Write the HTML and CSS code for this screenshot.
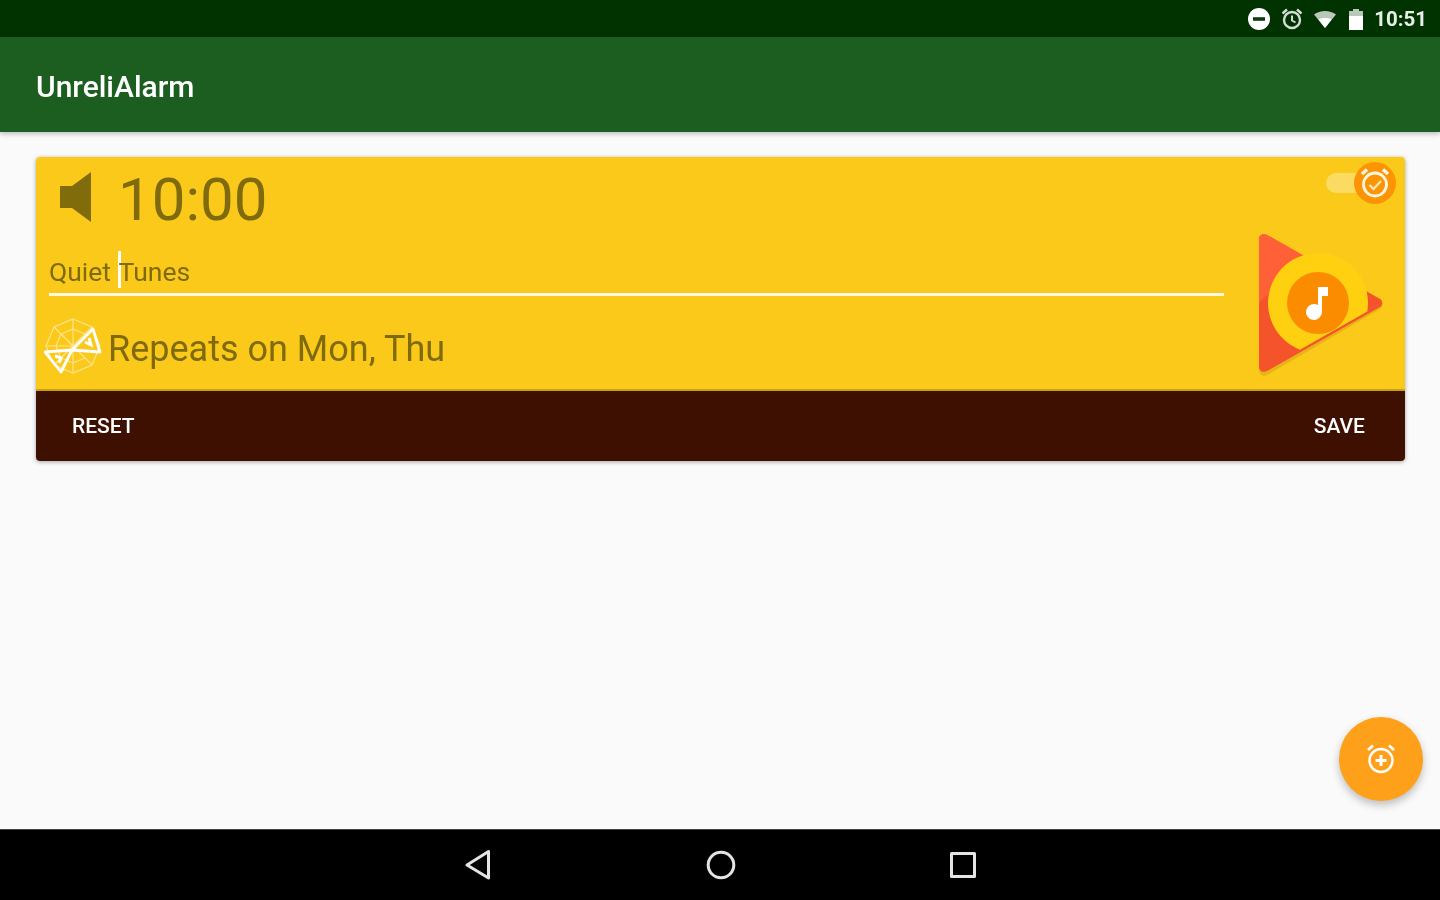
FILE: index.html
```html
<!DOCTYPE html>
<html lang="en">
<head>
  <meta charset="UTF-8" />
  <meta name="viewport" content="width=device-width, initial-scale=1.0" />
  <title>UnreliAlarm</title>
  <link rel="stylesheet" href="styles.css">
</head>
<body>
  <div class="screen">
    <div class="status-bar">
      <svg class="status-icon" width="24" height="24" viewBox="0 0 24 24"><circle cx="12" cy="12" r="11" fill="#fff"/><rect x="6" y="10.2" width="12" height="3.6" fill="#0f3d0f"/></svg>
      <svg class="status-icon" width="24" height="24" viewBox="0 0 24 24" fill="none" stroke="#d5dcd5"><circle cx="12" cy="13" r="8" stroke-width="2.4"/><path d="M12 8.5V13.5L15.5 15.5" stroke-width="2"/><path d="M2.5 6.5L7 2.5M21.5 6.5L17 2.5" stroke-width="2.4"/></svg>
      <svg class="status-icon" width="24" height="24" viewBox="0 0 24 24"><path d="M1 7.5C7 2.8 17 2.8 23 7.5L12 21Z" fill="#b9c8b9"/><path d="M5.5 12.5C9 10.5 15 10.5 18.5 12.5L12 21Z" fill="#fff"/></svg>
      <svg class="status-icon battery" width="16" height="24" viewBox="0 0 16 24"><path d="M5 2V4H1V23H15V4H11V2Z" fill="#b9c8b9"/><rect x="1" y="9" width="14" height="14" fill="#fff"/></svg>
      <span class="clock">10:51</span>
    </div>
    <header class="app-bar"><span>UnreliAlarm</span></header>

    <main class="content">
      <section class="alarm-card">
        <div class="alarm-body">
          <div class="alarm-main">
            <div class="time-row">
              <svg class="speaker" width="34" height="52" viewBox="0 0 34 52"><path d="M1 15H13L32 1V51L13 37H1Z" fill="#816c0c"/></svg>
              <span class="time">10:00</span>
            </div>
            <div class="label-field">
              <span>Quiet </span><span class="caret"></span><span>Tunes</span>
            </div>
            <div class="repeat-row">
              <svg class="days-wheel" width="58" height="58" viewBox="0 0 58 58" fill="none" stroke="#fff">
                <g opacity=".5" stroke-width="1.2">
                  <path d="M29 2L48 10L56 29L48 48L29 56L10 48L2 29L10 10Z"/>
                  <path d="M29 2V29M48 10L29 29M48 48L29 29M29 56V29M10 48L29 29M2 29H29M10 10L29 29"/>
                  <path d="M29 12L41 17M17 17L29 12M12 29L17 17M17 41L12 29M29 46L17 41M41 41L29 46"/>
                </g>
                <path d="M28 33L49 12L56 35ZM28 33L1 35L17 55Z" stroke-width="2.8" stroke-linejoin="round"/>
                <path d="M41 25L47 28L45 21M11 39L17 41L15 46" stroke-width="3"/>
              </svg>
              <span class="repeats">Repeats on Mon, Thu</span>
            </div>
          </div>
          <div class="alarm-art">
            <svg width="130" height="144" viewBox="0 0 130 144">
              <path d="M3 8C3 2 7 0 11 2L124 66C127 68 127 74 124 76L11 142C7 144 3 142 3 136Z" fill="#d9a114" opacity=".55"/>
              <path d="M3 6C3 2 7 0 11 2L124 66C127 68 127 72 124 74L11 138C7 140 3 138 3 134Z" fill="#f4532b"/>
              <path d="M3 6C3 2 7 0 11 2L50 24L3 70Z" fill="#ff6038"/>
              <path d="M111.300 78.400A50 50 0 1 0 44 116.700Z" fill="#ffd010"/>
              <circle cx="62" cy="70" r="31" fill="#fb8c00"/>
              <path d="M62 54H72V63H66V79A8 8 0 1 1 62 72Z" fill="#fff"/>
            </svg>
          </div>
        </div>
        <div class="alarm-actions">
          <span>RESET</span>
          <span>SAVE</span>
        </div>
        <div class="alarm-switch">
          <div class="switch-track"></div>
          <div class="switch-thumb">
            <svg width="34" height="34" viewBox="0 0 34 34" fill="none" stroke="#fff7e0"><circle cx="17" cy="18.500" r="11.500" stroke-width="2.800"/><path d="M4 8L9 3.500M30 8L25 3.500" stroke-width="3.400"/><path d="M11.500 19L15.500 23L23 15" stroke="#ffe9b0" stroke-width="2.400"/></svg>
          </div>
        </div>
      </section>
      <button class="fab">
        <svg width="34" height="34" viewBox="0 0 34 34" fill="none" stroke="#fff"><circle cx="17" cy="18.500" r="11.500" stroke-width="2.400"/><path d="M4 8L9 3.500M30 8L25 3.500" stroke-width="2.800"/><path d="M17 13V24M11.500 18.500H22.500" stroke-width="3"/></svg>
      </button>
    </main>

    <nav class="nav-bar">
      <svg width="28" height="32" viewBox="0 0 28 32" fill="none" stroke="#e4e4e4" stroke-width="3" stroke-linejoin="round"><path d="M24.500 2.500V29L3 16Z"/></svg>
      <svg width="30" height="30" viewBox="0 0 30 30" fill="none" stroke="#e4e4e4" stroke-width="3"><circle cx="15" cy="15" r="12.800"/></svg>
      <svg width="26" height="26" viewBox="0 0 26 26" fill="none" stroke="#e4e4e4" stroke-width="3" stroke-linejoin="round"><rect x="1.500" y="1.500" width="23" height="23"/></svg>
    </nav>
  </div>
</body>
</html>
```

FILE: styles.css
```css
* {
  box-sizing: border-box;
}
body {
  margin: 0;
  background: #fafafa;
  font-family: Roboto, "Liberation Sans", sans-serif;
  overflow: hidden;
}
/* the reference is an upscaled capture, so text and icons are a little soft */
svg, span {
  filter: blur(0.5px);
}
.screen {
  width: 1440px;
  height: 900px;
  display: flex;
  flex-direction: column;
}
.status-bar {
  height: 37px;
  background: #013300;
  color: #e9eee9;
  display: flex;
  align-items: center;
  justify-content: flex-end;
  padding-right: 13px;
}
.status-icon {
  margin-right: 9px;
}
.battery {
  margin-left: 2px;
  margin-right: 10px;
}
.clock {
  font-size: 20.500px;
  font-weight: 700;
}
.app-bar {
  height: 95px;
  background: #1b5e20;
  color: #fff;
  font-size: 30px;
  font-weight: 500;
  line-height: 99px;
  padding-left: 36px;
  box-shadow: 0 2px 5px rgba(0,0,0,0.25);
  position: relative;
}
.content {
  flex: 1;
  padding: 25px 35px 0 36px;
  position: relative;
}
.alarm-card {
  height: 304px;
  border-radius: 4px;
  overflow: hidden;
  display: flex;
  flex-direction: column;
  position: relative;
  box-shadow: 0 1px 4px rgba(0,0,0,0.35);
}
.alarm-body {
  height: 234px;
  background: #fac91a;
  display: flex;
  border-bottom: 2px solid #c9a115;
}
.alarm-main {
  width: 1188px;
  padding-left: 13px;
  display: flex;
  flex-direction: column;
}
.time-row {
  height: 84px;
  display: flex;
  align-items: center;
  gap: 25px;
  padding: 0 0 0 10px;
}
.speaker {
  margin-top: -5px;
}
.time {
  font-size: 60px;
  color: #7f6b0d;
  line-height: 84px;
  margin-top: 2px;
}
.label-field {
  height: 55px;
  border-bottom: 3px solid #fff9e6;
  font-size: 26.500px;
  color: #7f6b0d;
  display: flex;
  align-items: flex-end;
  padding-bottom: 6px;
  white-space: pre;
}
.caret {
  width: 3px;
  height: 37px;
  background: #fff;
  margin-bottom: -1px;
  margin-right: -2px;
}
.repeat-row {
  display: flex;
  align-items: center;
  gap: 6px;
  margin-left: -5px;
  margin-top: 21px;
}
.repeats {
  font-size: 36px;
  color: #7f6b0d;
  margin-top: 5px;
}
.alarm-art {
  padding: 76px 0 0 32px;
}
.alarm-actions {
  flex: 1;
  background: #3e1002;
  color: #fff;
  display: flex;
  justify-content: space-between;
  align-items: center;
  padding: 0 40px 0 36px;
  font-size: 21px;
  font-weight: 500;
}
.alarm-switch {
  position: absolute;
  top: 5px;
  right: 9px;
  display: flex;
  align-items: center;
}
.switch-track {
  width: 44px;
  height: 20px;
  border-radius: 10px;
  background: #fcdb62;
  margin-right: -16px;
}
.switch-thumb {
  width: 42px;
  height: 42px;
  border-radius: 50%;
  background: #fd9406;
  display: flex;
  align-items: center;
  justify-content: center;
}
.fab {
  position: absolute;
  right: 17px;
  bottom: 28px;
  width: 84px;
  height: 84px;
  border: none;
  border-radius: 50%;
  background: #ffa01a;
  box-shadow: 0 4px 8px rgba(0,0,0,0.25);
  display: flex;
  align-items: center;
  justify-content: center;
  padding: 0;
}
.nav-bar {
  height: 71px;
  background: #000;
  display: flex;
  align-items: center;
  justify-content: center;
  gap: 214px;
  border-top: 1px solid #444;
}
```
